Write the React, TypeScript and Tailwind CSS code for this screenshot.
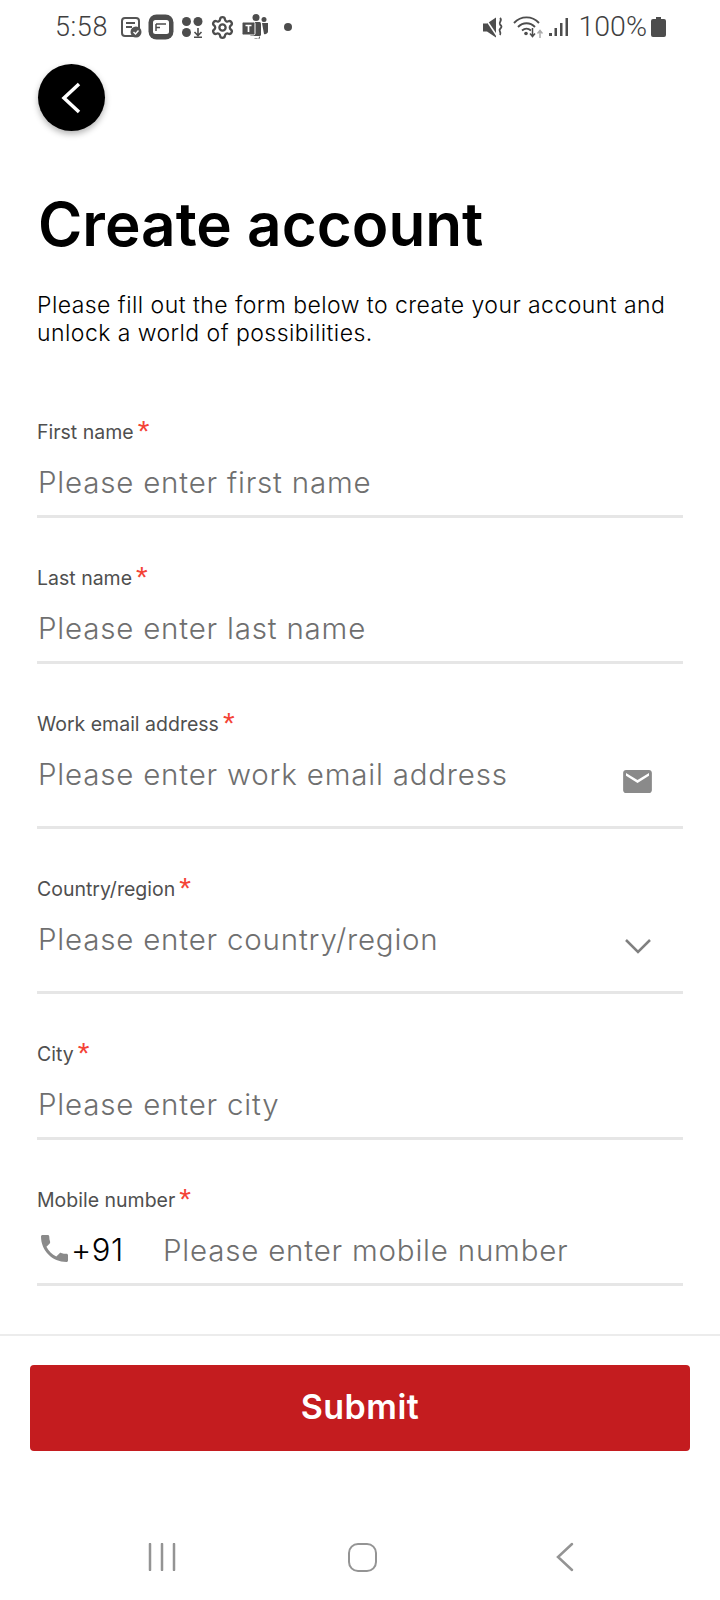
import { ReactNode } from "react";
import { Settings } from "lucide-react";

function StatusBar() {
  return (
    <div className="flex h-[54px] items-center justify-between pl-[55px] pr-[54px] text-[#3f3f3f]">
      <div className="flex items-center">
        <span className="text-[27px] leading-none font-['Roboto',sans-serif] font-light tracking-[0.6px] w-[66px]">5:58</span>
        <div className="flex items-center gap-[8px] -ml-[1px]">
          <svg width="22" height="22" viewBox="0 0 22 22" fill="none">
            <rect x="2" y="2" width="17" height="18" rx="3" stroke="#555" strokeWidth="2" />
            <path d="M6 7h9M6 11h6" stroke="#555" strokeWidth="2" />
            <circle cx="16" cy="16" r="5.5" fill="#555" />
            <path d="M13.5 16l2 2 3-3.5" stroke="#fff" strokeWidth="1.4" />
          </svg>
          <svg width="26" height="26" viewBox="0 0 26 26" className="-ml-[2px]">
            <rect x="0.5" y="0.5" width="25" height="25" rx="8" fill="#4d4d4d" />
            <rect x="5" y="6" width="16" height="14" rx="2.5" fill="#fff" />
            <path d="M8 10h10M8 10v7M8 13.500h4" stroke="#4d4d4d" strokeWidth="1.5" fill="none" />
          </svg>
          <svg width="22" height="22" viewBox="0 0 22 22" className="-ml-[1px]">
            <circle cx="5.5" cy="5.5" r="4.5" fill="#4d4d4d" />
            <circle cx="17" cy="5.5" r="4.5" fill="#4d4d4d" />
            <circle cx="5.5" cy="16.5" r="4.5" fill="#4d4d4d" />
            <path d="M17 12v7M13.5 16l3.5 3.5 3.5-3.5M13 21.3h8" stroke="#4d4d4d" strokeWidth="1.6" fill="none" />
          </svg>
          <Settings size={25} color="#4d4d4d" strokeWidth={2.200} className="-ml-[1px]" />
          <svg width="26" height="26" viewBox="0 0 26 26" className="-ml-[1px]">
            <circle cx="14" cy="3.500" r="3.500" fill="#4d4d4d" />
            <circle cx="22" cy="5.500" r="2.500" fill="#4d4d4d" />
            <rect x="8" y="8" width="11" height="14" rx="1.500" fill="#4d4d4d" />
            <path d="M20 9h6v8a3 3 0 0 1-4 3z" fill="#4d4d4d" />
            <path d="M18 21a4 4 0 0 1-6 3.500h6z" fill="#4d4d4d" />
            <rect x="0" y="8" width="13" height="13" rx="1.500" fill="#4d4d4d" stroke="#fff" />
            <path d="M3.500 11.500h6M6.500 11.500v6.500" stroke="#fff" strokeWidth="1.700" />
          </svg>
        </div>
        <span className="ml-[16px] size-[8px] rounded-full bg-[#4d4d4d]" />
      </div>
      <div className="flex items-center">
        <svg width="21" height="21" viewBox="0 0 21 21" className="mr-[9px]">
          <path d="M0 6.500h4L13 .5v20L4 14.500H0z" fill="#4d4d4d" />
          <path d="M2 1l12 18" stroke="#fff" strokeWidth="1.500" />
          <path d="M17 1c3 2.500-2 4.500 0 6.500s2 2.500 0 4.500 2 3 0 6" stroke="#4d4d4d" strokeWidth="1.800" fill="none" />
        </svg>
        <svg width="30" height="24" viewBox="0 0 30 24" fill="none" className="mr-[6px]">
          <path d="M1 8c7-7.500 18-7.500 25 0M5 12c5-5 12-5 17 0M9 15.500c3-2.500 6-2.500 9 0" stroke="#4d4d4d" strokeWidth="1.900" />
          <circle cx="13" cy="18.500" r="1.800" fill="#4d4d4d" />
          <path d="M19.500 13v8M17 18.500l2.500 3 2.500-3" stroke="#4d4d4d" strokeWidth="1.500" />
          <path d="M27 23v-7M24.500 18.500l2.500-3 2.500 3" stroke="#aaa" strokeWidth="1.500" />
        </svg>
        <svg width="20" height="20" viewBox="0 0 20 20" className="mr-[10px]">
          <rect x="0" y="16" width="3" height="3" fill="#4d4d4d" />
          <rect x="5.500" y="11" width="2.500" height="8" fill="#4d4d4d" />
          <rect x="11" y="6" width="2.500" height="13" fill="#4d4d4d" />
          <rect x="16.500" y="1" width="2.500" height="18" fill="#4d4d4d" />
        </svg>
        <span className="text-[28.500px] leading-none font-['Roboto',sans-serif] font-light">100%</span>
        <svg width="15" height="20" viewBox="0 0 15 20" className="ml-[4px]">
          <path d="M5 0h5v2h3a2 2 0 0 1 2 2v14a2 2 0 0 1-2 2H2a2 2 0 0 1-2-2V4a2 2 0 0 1 2-2h3z" fill="#4d4d4d" />
        </svg>
      </div>
    </div>
  );
}

type FieldProps = {
  label: string;
  placeholder: string;
  icon?: ReactNode;
  prefix?: ReactNode;
  tall?: boolean;
};

function Field({ label, placeholder, icon, prefix, tall }: FieldProps) {
  return (
    <div className="mt-[48px] first:mt-0">
      <div className="flex h-[24px] items-start text-[19.500px] leading-[24px] text-[#4f4f4f] font-['Inter',sans-serif]">
        {label}
        <span className="ml-[4px] -mt-[4px] text-[30px] leading-[30px] text-[#f44336] font-['Liberation_Sans',sans-serif]">*</span>
      </div>
      <div
        className={`flex items-start justify-between border-b-[3px] border-[#e6e6e6] pl-[1px] pt-[20px] ${
          tall ? "h-[93px]" : "h-[74px]"
        }`}
      >
        <div className="flex items-center">
          {prefix}
          <span className="text-[29.500px] leading-[36px] tracking-[0.8px] text-[#6f6f6f] font-['Inter',sans-serif] font-light">
            {placeholder}
          </span>
        </div>
        {icon}
      </div>
    </div>
  );
}

export default function App() {
  return (
    <div className="h-[1600px] w-[720px] overflow-hidden bg-white flex flex-col font-['Inter',sans-serif]">
      <StatusBar />
      <div className="px-[37px] pt-[10px]">
        <button className="ml-[1px] flex size-[67px] items-center justify-center rounded-full bg-black shadow-[0_3px_6px_rgba(0,0,0,0.3)]">
          <svg width="20" height="32" viewBox="0 0 20 32" fill="none" stroke="#fff" strokeWidth="3.500" className="-ml-[2px]">
            <path d="M18 2L3 16l15 14" />
          </svg>
        </button>
        <h1 className="ml-[1px] mt-[57px] text-[60.200px] leading-[74px] font-semibold text-black">Create account</h1>
        <p className="mt-[29px] text-[23px] leading-[28px] text-black tracking-[0.45px] font-['Inter',sans-serif] font-[350]">
          Please fill out the form below to create your account and
          <br />
          unlock a world of possibilities.
        </p>
        <div className="mt-[73px] w-[646px]">
          <Field label="First name" placeholder="Please enter first name" />
          <Field label="Last name" placeholder="Please enter last name" />
          <Field
            label="Work email address"
            placeholder="Please enter work email address"
            tall
            icon={
              <svg width="29" height="23" viewBox="2 4 20 16" fill="#8a8a8a" className="mr-[31px] mt-[14px]">
                <path d="M20 4H4c-1.100 0-1.990.9-1.990 2L2 18c0 1.100.9 2 2 2h16c1.100 0 2-.9 2-2V6c0-1.100-.9-2-2-2zm0 4l-8 5-8-5V6l8 5 8-5v2z" />
              </svg>
            }
          />
          <Field
            label="Country/region"
            placeholder="Please enter country/region"
            tall
            icon={
              <svg width="26" height="15" viewBox="0 0 26 15" fill="none" stroke="#808080" strokeWidth="2.500" className="mr-[32px] mt-[18px]">
                <path d="M1 1l12 12L25 1" />
              </svg>
            }
          />
          <Field label="City" placeholder="Please enter city" />
          <Field
            label="Mobile number"
            placeholder="Please enter mobile number"
            prefix={
              <>
                <svg width="27" height="27" viewBox="3 3 18 18" fill="#8a8a8a" className="ml-[3px] mr-[3px] mt-[-4px]">
                  <path d="M6.620 10.790c1.440 2.830 3.760 5.140 6.590 6.590l2.200-2.200c.27-.27.67-.36 1.020-.24 1.120.37 2.330.57 3.570.57.55 0 1 .45 1 1V20c0 .55-.45 1-1 1-9.390 0-17-7.610-17-17 0-.55.45-1 1-1h3.500c.55 0 1 .45 1 1 0 1.250.2 2.450.57 3.570.11.35.03.74-.25 1.020l-2.200 2.200z" />
                </svg>
                <span className="w-[92px] text-[31px] leading-[36px] tracking-[0.5px] text-black font-['Inter',sans-serif] font-light">+91</span>
              </>
            }
          />
        </div>
      </div>
      <div className="mt-[48px] border-t-[2px] border-[#ececec] px-[30px] pt-[29px]">
        <button className="flex h-[86px] w-full items-center justify-center rounded-[4px] bg-[#c41c1f] pb-[3px] text-[34px] tracking-[0.5px] font-semibold text-white">
          Submit
        </button>
      </div>
      <div className="mt-[91px] flex items-center justify-between pl-[148px] pr-[146px]">
        <svg width="28" height="28" viewBox="0 0 28 28" stroke="#949494" strokeWidth="2.500" strokeLinecap="round">
          <path d="M2 1v26M14 1v26M26 1v26" />
        </svg>
        <div className="mr-[8px] size-[29px] rounded-[10px] border-[2.500px] border-[#949494]" />
        <svg width="18" height="30" viewBox="0 0 18 30" fill="none" stroke="#949494" strokeWidth="2.500" strokeLinecap="round">
          <path d="M16 2L2 15l14 13" />
        </svg>
      </div>
    </div>
  );
}
